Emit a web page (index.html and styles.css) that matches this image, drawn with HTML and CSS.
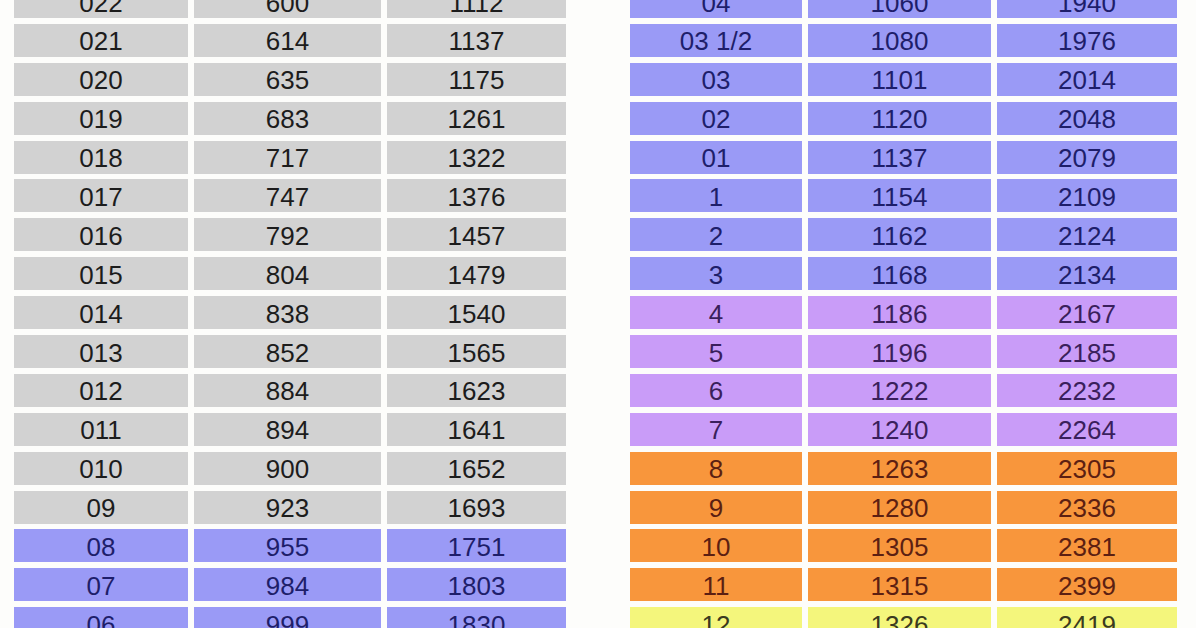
FILE: index.html
```html
<!DOCTYPE html>
<html>
<head>
<meta charset="utf-8">
<link rel="stylesheet" href="styles.css">
</head>
<body>
<div class="page">
  <div class="sheet left">
    <div class="c g">022</div><div class="c g">600</div><div class="c g">1112</div>
    <div class="c g">021</div><div class="c g">614</div><div class="c g">1137</div>
    <div class="c g">020</div><div class="c g">635</div><div class="c g">1175</div>
    <div class="c g">019</div><div class="c g">683</div><div class="c g">1261</div>
    <div class="c g">018</div><div class="c g">717</div><div class="c g">1322</div>
    <div class="c g">017</div><div class="c g">747</div><div class="c g">1376</div>
    <div class="c g">016</div><div class="c g">792</div><div class="c g">1457</div>
    <div class="c g">015</div><div class="c g">804</div><div class="c g">1479</div>
    <div class="c g">014</div><div class="c g">838</div><div class="c g">1540</div>
    <div class="c g">013</div><div class="c g">852</div><div class="c g">1565</div>
    <div class="c g">012</div><div class="c g">884</div><div class="c g">1623</div>
    <div class="c g">011</div><div class="c g">894</div><div class="c g">1641</div>
    <div class="c g">010</div><div class="c g">900</div><div class="c g">1652</div>
    <div class="c g">09</div><div class="c g">923</div><div class="c g">1693</div>
    <div class="c b">08</div><div class="c b">955</div><div class="c b">1751</div>
    <div class="c b">07</div><div class="c b">984</div><div class="c b">1803</div>
    <div class="c b">06</div><div class="c b">999</div><div class="c b">1830</div>
  </div>
  <div class="sheet right">
    <div class="c b">04</div><div class="c b">1060</div><div class="c b">1940</div>
    <div class="c b">03 1/2</div><div class="c b">1080</div><div class="c b">1976</div>
    <div class="c b">03</div><div class="c b">1101</div><div class="c b">2014</div>
    <div class="c b">02</div><div class="c b">1120</div><div class="c b">2048</div>
    <div class="c b">01</div><div class="c b">1137</div><div class="c b">2079</div>
    <div class="c b">1</div><div class="c b">1154</div><div class="c b">2109</div>
    <div class="c b">2</div><div class="c b">1162</div><div class="c b">2124</div>
    <div class="c b">3</div><div class="c b">1168</div><div class="c b">2134</div>
    <div class="c p">4</div><div class="c p">1186</div><div class="c p">2167</div>
    <div class="c p">5</div><div class="c p">1196</div><div class="c p">2185</div>
    <div class="c p">6</div><div class="c p">1222</div><div class="c p">2232</div>
    <div class="c p">7</div><div class="c p">1240</div><div class="c p">2264</div>
    <div class="c o">8</div><div class="c o">1263</div><div class="c o">2305</div>
    <div class="c o">9</div><div class="c o">1280</div><div class="c o">2336</div>
    <div class="c o">10</div><div class="c o">1305</div><div class="c o">2381</div>
    <div class="c o">11</div><div class="c o">1315</div><div class="c o">2399</div>
    <div class="c y">12</div><div class="c y">1326</div><div class="c y">2419</div>
  </div>
</div>
</body>
</html>
```
FILE: styles.css
```css
html, body {
  margin: 0;
  padding: 0;
  background: #fdfdfb;
  overflow: hidden;
}

.page {
  display: flex;
  align-items: flex-start;
  gap: 64px;
  padding-left: 14px;
  margin-top: -15px;
  font-family: "Liberation Sans", Arial, sans-serif;
  font-size: 26px;
}

.sheet {
  display: grid;
  grid-auto-rows: 33px;
  column-gap: 6px;
  row-gap: 5.9px;
}

.left {
  grid-template-columns: 174px 187px 179px;
}

.right {
  grid-template-columns: 172px 183px 180px;
}

.c {
  display: flex;
  align-items: center;
  justify-content: center;
  padding-top: 2px;
  box-sizing: border-box;
  line-height: 1;
  white-space: nowrap;
}

.g { background: #d2d2d2; color: #1c1c1c; }
.b { background: #9a9af6; color: #1e1e6a; }
.p { background: #c99cf8; color: #3a1f5c; }
.o { background: #f8963c; color: #5c1f12; }
.y { background: #f4f67c; color: #3a3a20; }
```
